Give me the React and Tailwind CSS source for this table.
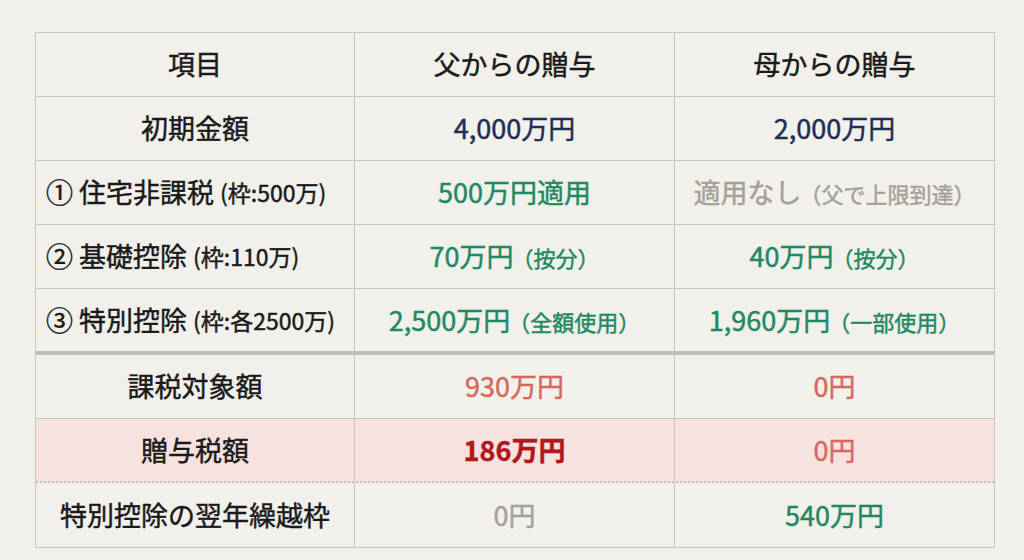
const rows = [
  {
    label: "初期金額",
    align: "center",
    father: { main: "4,000万円", color: "text-[#1d2f52]" },
    mother: { main: "2,000万円", color: "text-[#1d2f52]" },
  },
  {
    label: "① 住宅非課税",
    note: "(枠:500万)",
    align: "left",
    father: { main: "500万円適用", color: "text-[#1f8a62]" },
    mother: { main: "適用なし", sub: "（父で上限到達）", color: "text-[#a5a198]" },
  },
  {
    label: "② 基礎控除",
    note: "(枠:110万)",
    align: "left",
    father: { main: "70万円", sub: "（按分）", color: "text-[#1f8a62]" },
    mother: { main: "40万円", sub: "（按分）", color: "text-[#1f8a62]" },
  },
  {
    label: "③ 特別控除",
    note: "(枠:各2500万)",
    align: "left",
    father: { main: "2,500万円", sub: "（全額使用）", color: "text-[#1f8a62]" },
    mother: { main: "1,960万円", sub: "（一部使用）", color: "text-[#1f8a62]" },
    thick: true,
  },
  {
    label: "課税対象額",
    align: "center",
    father: { main: "930万円", color: "text-[#d6685b]" },
    mother: { main: "0円", color: "text-[#d6685b]" },
  },
  {
    label: "贈与税額",
    align: "center",
    pink: true,
    father: { main: "186万円", color: "text-[#b3161c] font-bold" },
    mother: { main: "0円", color: "text-[#d6685b]" },
  },
  {
    label: "特別控除の翌年繰越枠",
    align: "center",
    last: true,
    father: { main: "0円", color: "text-[#a5a198]" },
    mother: { main: "540万円", color: "text-[#1f8a62]" },
  },
];

function Value({ v }) {
  return (
    <div className={`flex items-baseline justify-center ${v.color}`}>
      <span className="text-[27px]">{v.main}</span>
      {v.sub && <span className="text-[22px] ml-[-2px]">{v.sub}</span>}
    </div>
  );
}

function Row({ r }) {
  let border = "border-b border-[#c9c6bc]";
  if (r.thick) border = "border-b-[4px] border-[#c2bfb5]";
  if (r.pink) border = "border-b-2 border-dotted border-[#c2bfb5]";
  if (r.last) border = "";
  return (
    <div
      className={`grid grid-cols-[319px_320px_1fr] ${r.thick ? "h-[66px]" : "h-[64px]"} ${border} ${
        r.pink ? "bg-[#f6e2df]" : ""
      }`}
    >
      <div
        className={`flex items-center border-r border-[#c9c6bc] text-[#1a1a1a] ${
          r.align === "left" ? "justify-start pl-[10px]" : "justify-center"
        }`}
      >
        <span className="text-[27px]">{r.label}</span>
        {r.note && <span className="text-[23px] ml-[6px]">{r.note}</span>}
      </div>
      <div className="flex items-center justify-center border-r border-[#c9c6bc]">
        <Value v={r.father} />
      </div>
      <div className="flex items-center justify-center">
        <Value v={r.mother} />
      </div>
    </div>
  );
}

export default function App() {
  return (
    <div
      className="w-[1024px] h-[560px] bg-[#f1f0eb] pl-[35px] pt-[32px] [-webkit-text-stroke:0.45px_currentColor]"
      style={{ fontFamily: '"Noto Sans CJK JP", "Noto Sans", sans-serif' }}
    >
      <div className="w-[960px] border border-[#c9c6bc]">
        <div className="grid grid-cols-[319px_320px_1fr] h-[64px] border-b border-[#c9c6bc] text-[#1a1a1a] text-[27px]">
          <div className="flex items-center justify-center border-r border-[#c9c6bc]">項目</div>
          <div className="flex items-center justify-center border-r border-[#c9c6bc]">父からの贈与</div>
          <div className="flex items-center justify-center">母からの贈与</div>
        </div>
        {rows.map((r, i) => (
          <Row key={i} r={r} />
        ))}
      </div>
    </div>
  );
}
